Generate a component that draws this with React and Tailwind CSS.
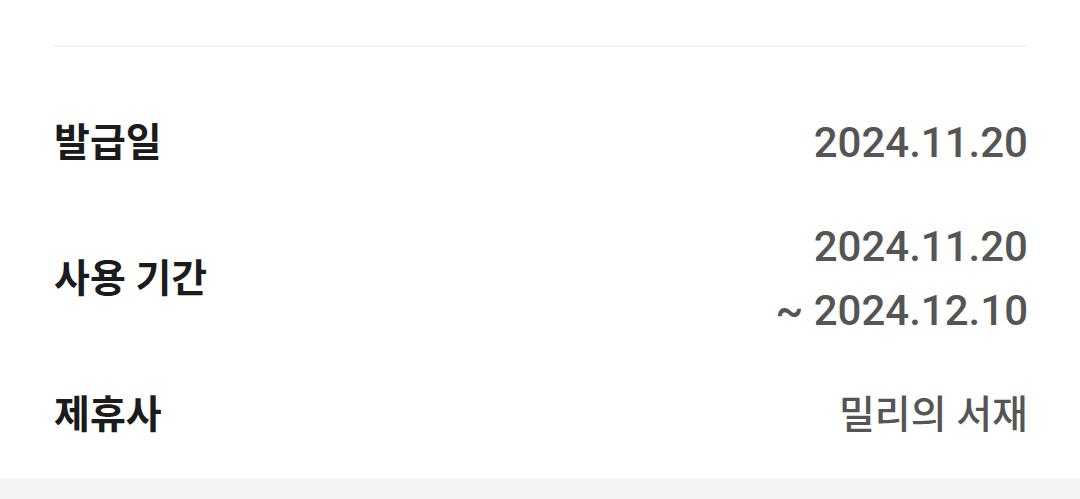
export default function App() {
  const font = { fontFamily: 'Roboto, "Noto Sans CJK KR", sans-serif' }
  const rows = [
    { label: '발급일', values: ['2024.11.20'], num: true },
    { label: '사용 기간', values: ['2024.11.20', '~ 2024.12.10'], num: true },
    { label: '제휴사', values: ['밀리의 서재'], num: false },
  ]

  return (
    <div className="w-[1080px] h-[499px] bg-white flex flex-col overflow-hidden" style={font}>
      <div className="px-[54px] pt-[45px]">
        <div className="h-[2px] bg-[#f2f2f2]" />
      </div>
      <div className="flex flex-col gap-[40px] pl-[54px] pr-[52px] pt-[64px] pb-[31px]">
        {rows.map((r, i) => (
          <div key={i} className="flex items-center justify-between">
            <span className="text-[39px] font-bold text-[#1b1b1b]">{r.label}</span>
            <div className="flex flex-col items-end">
              {r.values.map((v, j) => (
                <span
                  key={j}
                  className={`leading-[64px] font-medium text-[#555555] ${
                    r.num ? 'text-[42px]' : 'text-[39px]'
                  }`}
                >
                  {v}
                </span>
              ))}
            </div>
          </div>
        ))}
      </div>
      <div className="flex-1 bg-[#f1f3f5]" />
    </div>
  )
}
